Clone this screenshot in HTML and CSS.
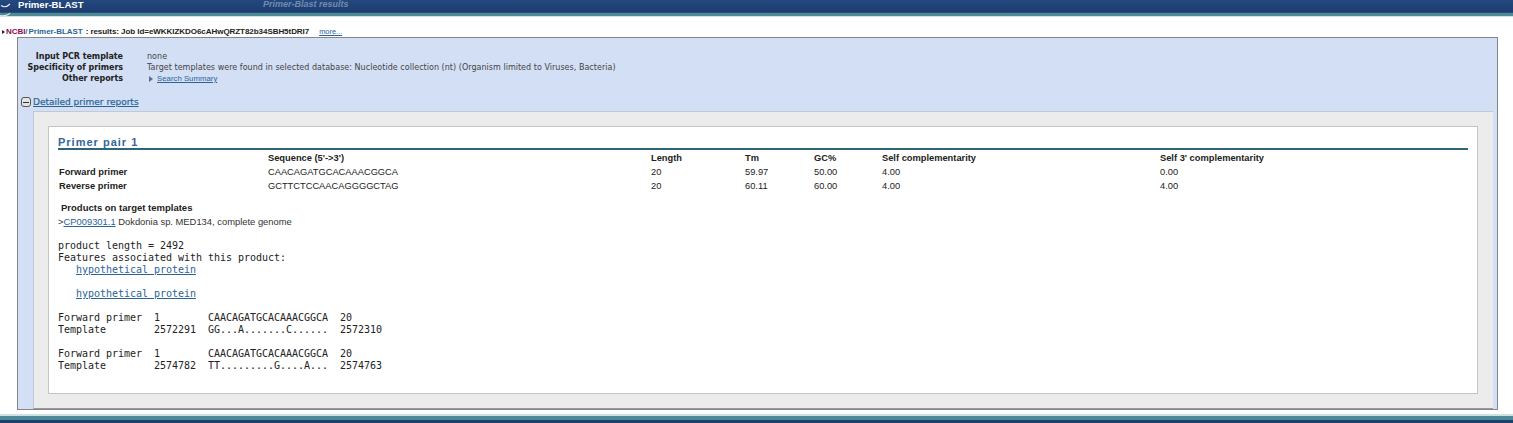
FILE: index.html
```html
<!DOCTYPE html>
<html>
<head>
<meta charset="utf-8">
<title>Primer-BLAST results</title>
<link rel="stylesheet" href="styles.css">
</head>
<body>
<header class="top">
  <div class="top-bar">
    <span class="app-name">Primer-BLAST</span>
    <span class="page-name">Primer-Blast results</span>
  </div>
  <div class="top-teal"></div>
  <svg class="logo" width="14" height="17" viewBox="0 0 14 17"><path d="M1 5.5c3 2 6 1.500 9-1.500M0 15.500c4 .5 8 0 10-2.500" fill="none" stroke="#e8eef5" stroke-width="1.100"/></svg>
</header>
<div class="crumbs">
  <span class="crumb-arrow"></span><span class="ncbi">NCBI</span><span class="slash">/</span>
  <span class="crumb-app">Primer-BLAST</span>
  <span class="crumb-job">: results: Job Id=eWKKIZKDO6cAHwQRZT82b34SBH5tDRI7</span>
  <a class="more" href="#">more...</a>
</div>
<main class="panel">
  <dl class="summary">
    <dt>Input PCR template</dt><dd>none</dd>
    <dt>Specificity of primers</dt><dd>Target templates were found in selected database: Nucleotide collection (nt) (Organism limited to Viruses, Bacteria)</dd>
    <dt>Other reports</dt><dd class="reports"><span class="tri"></span><a href="#">Search Summary</a></dd>
  </dl>
  <div class="section-head">
    <span class="toggle"></span><a href="#">Detailed primer reports</a>
  </div>
  <section class="outer">
    <div class="card">
      <h2>Primer pair 1</h2>
      <div class="primers">
        <span></span><b>Sequence (5'-&gt;3')</b><b>Length</b><b>Tm</b><b>GC%</b><b>Self complementarity</b><b>Self 3' complementarity</b>
        <b>Forward primer</b><span>CAACAGATGCACAAACGGCA</span><span>20</span><span>59.97</span><span>50.00</span><span>4.00</span><span>0.00</span>
        <b>Reverse primer</b><span>GCTTCTCCAACAGGGGCTAG</span><span>20</span><span>60.11</span><span>60.00</span><span>4.00</span><span>4.00</span>
      </div>
      <h3>Products on target templates</h3>
      <p class="product">&gt;<a href="#">CP009301.1</a> Dokdonia sp. MED134, complete genome</p>
<pre>
product length = 2492
Features associated with this product:
   <a href="#">hypothetical protein</a>

   <a href="#">hypothetical protein</a>

Forward primer  1        CAACAGATGCACAAACGGCA  20
Template        2572291  GG...A.......C......  2572310

Forward primer  1        CAACAGATGCACAAACGGCA  20
Template        2574782  TT.........G....A...  2574763
</pre>
    </div>
  </section>
</main>
<footer class="bottom"></footer>
</body>
</html>
```
FILE: styles.css
```css
html, body { margin: 0; padding: 0; }
body {
  width: 1513px;
  height: 423px;
  overflow: hidden;
  background: #fff;
  color: #222;
  font-family: "Liberation Sans", Arial, sans-serif;
  font-size: 10px;
  display: flex;
  flex-direction: column;
}
a { color: #2a6496; text-decoration: underline; }

.top { position: relative; }
.top-bar {
  height: 12px;
  background: linear-gradient(#24497e, #1d3c70);
  display: flex;
  align-items: flex-start;
  overflow: hidden;
}
.logo { position: absolute; left: 0; top: 0; }
.app-name {
  margin-left: 18px;
  color: #fff;
  font-weight: bold;
  font-size: 9.6px;
  width: 245px;
  line-height: 9px;
}
.page-name {
  color: #6f8bb0;
  font-weight: bold;
  font-style: italic;
  font-size: 9px;
  line-height: 9px;
}
.top-teal {
  height: 5px;
  background: linear-gradient(#2a4f6e 0, #2a4f6e 1px, #4d8a99 1px, #4d8a99 4px, #cfe3e3 4px);
}

.crumbs {
  margin-top: 9px;
  height: 11px;
  padding-left: 2px;
  font-size: 8px;
  font-weight: bold;
  line-height: 11px;
  display: flex;
  align-items: center;
  white-space: nowrap;
  color: #222;
  letter-spacing: -0.05px;
}
.crumb-arrow {
  width: 0; height: 0;
  border-left: 3px solid #222;
  border-top: 2.5px solid transparent;
  border-bottom: 2.5px solid transparent;
  margin-right: 1px;
}
.ncbi { color: #8b0a50; }
.slash { color: #2a6496; }
.crumb-app { color: #2a6496; margin-left: 1px; }
.crumb-job { margin-left: 3px; }
.more { font-weight: normal; margin-left: 10px; font-size: 7.5px; }

.panel {
  margin: 0 15px 0 17px;
  height: 371px;
  border: 1px solid #85868c;
  background: #d3dff5;
  display: flex;
  flex-direction: column;
  overflow: hidden;
  font-family: "DejaVu Sans", sans-serif;
}
.summary {
  margin: 13px 0 0 0;
  display: grid;
  grid-template-columns: 105px 1fr;
  column-gap: 24px;
  font-size: 8px;
  line-height: 11px;
  color: #444;
  letter-spacing: 0.03px;
}
.summary dt { text-align: right; font-weight: bold; color: #222; letter-spacing: -0.05px; }
.summary dd { margin: 0; }
.reports { display: flex; align-items: center; font-family: "Liberation Sans", sans-serif; }
.tri {
  width: 0; height: 0;
  border-left: 4px solid #5e6e88;
  border-top: 3px solid transparent;
  border-bottom: 3px solid transparent;
  margin: 0 4px 0 2px;
}
.reports a { font-size: 7.75px; }
.section-head {
  margin: 12px 0 0 3px;
  display: flex;
  align-items: center;
  height: 12px;
  font-size: 9px;
}
.section-head a { -webkit-text-stroke: 0.2px #2a6496; margin-left: 2px; }
.toggle {
  width: 8px;
  height: 8px;
  border: 1px solid #555;
  border-radius: 3px;
  background: linear-gradient(#333, #333) center / 6px 1px no-repeat #e4e4e4;
}
.outer {
  margin: 3px 4px 0 15px;
  flex: 1;
  background: #ececec;
  border: 1px solid #c4c8d4;
  border-bottom: 1px solid #999;
  border-right: 0;
  padding: 14px 15px 14px 14px;
  display: flex;
  flex-direction: column;
  min-height: 0;
}
.card {
  flex: 1;
  background: #fff;
  border: 1px solid #c4c4c4;
  padding: 9px 9px 0 9px;
  min-height: 0;
  overflow: hidden;
}
h2 {
  margin: 0;
  height: 12px;
  font-family: "Liberation Sans", sans-serif;
  font-size: 11px;
  line-height: 13px;
  letter-spacing: 1px;
  font-weight: bold;
  color: #336699;
  border-bottom: 2px solid #2c6677;
}
.primers {
  display: grid;
  grid-template-columns: 209px 383px 94px 69px 68px 278px 1fr;
  grid-auto-rows: 14px;
  padding-left: 1px;
  margin-top: 1px;
  font-family: "Liberation Sans", sans-serif;
  font-size: 9.3px;
  line-height: 14px;
  color: #222;
}
h3 {
  margin: 9px 0 0 3px;
  height: 12px;
  font-family: "Liberation Sans", sans-serif;
  font-size: 9.5px;
  line-height: 12px;
  font-weight: bold;
  color: #222;
}
.product {
  margin: 1px 0 0;
  font-family: "Liberation Sans", sans-serif;
  font-size: 9.4px;
  line-height: 13px;
  color: #333;
}
pre {
  margin: 12px 0 0;
  font-family: "DejaVu Sans Mono", monospace;
  font-size: 10px;
  line-height: 12px;
  letter-spacing: -0.02px;
  color: #222;
}
.bottom {
  margin-top: 4px;
  flex: 1;
  background: linear-gradient(#cfe0e0 0, #cfe0e0 2px, #4d8a99 2px, #4d8a99 6px, #1e3f6c 6px);
}
```
